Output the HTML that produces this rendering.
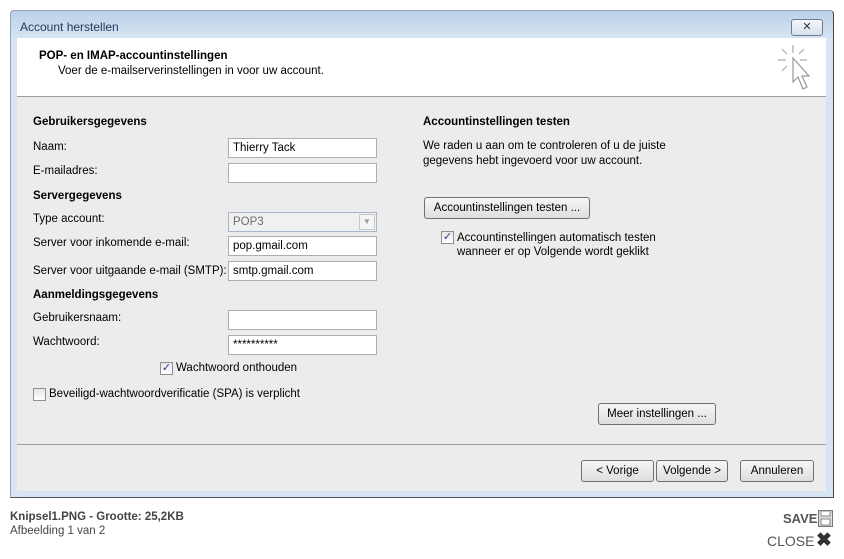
<!DOCTYPE html>
<html><head><meta charset="utf-8"><style>
*{margin:0;padding:0;box-sizing:border-box}
body{width:844px;height:559px;background:#fff;font-family:"Liberation Sans",sans-serif;font-size:11.5px;color:#000;position:relative;overflow:hidden}
.a{position:absolute;white-space:nowrap}
.b{font-weight:bold}
.in{position:absolute;background:#fff;border:1px solid #abadb3;height:20px;padding:3px 4px;font-size:11.5px}
.btn{position:absolute;height:22px;border:1px solid #707070;border-radius:3px;background:linear-gradient(#f6f6f6,#dedede);text-align:center;line-height:20px;font-size:11.5px}
.cb{position:absolute;width:13px;height:13px;border:1px solid #8f8f8f;background:linear-gradient(#e6e6e6,#fff)}
</style></head><body>
<div class="a" style="left:10px;top:10px;width:824px;height:488px;background:#cfdeee;border:1px solid #8ea4c0;border-right-color:#444;border-bottom-color:#555;border-radius:4px 4px 0 0;background:linear-gradient(#bcd0e6 0,#d7e5f3 28px,#d7e5f3 100%)"></div>
<div class="a" style="left:20px;top:20px;font-size:12px;color:#1e395b">Account herstellen</div>
<div class="a" style="left:791px;top:19px;width:32px;height:17px;border:1px solid #6b7d95;border-radius:3px;background:linear-gradient(#f4f7fa,#d8e1ec);text-align:center;font-size:11px;line-height:15px;color:#333">✕</div>
<div class="a" style="left:17px;top:38px;width:809px;height:453px;background:#ececec"></div>
<div class="a" style="left:17px;top:38px;width:809px;height:59px;background:#fff;border-bottom:1px solid #a0a0a0"></div>
<div class="a b" style="left:39px;top:50px">POP- en IMAP-accountinstellingen</div>
<div class="a" style="left:58px;top:65px">Voer de e-mailserverinstellingen in voor uw account.</div>
<svg class="a" style="left:776px;top:42px" width="38" height="52" viewBox="0 0 38 52"><g stroke="#bbb" stroke-width="1.5"><line x1="17" y1="3" x2="17" y2="11"/><line x1="2" y1="18" x2="10" y2="18"/><line x1="6" y1="7" x2="11" y2="12"/><line x1="28" y1="7" x2="23" y2="12"/><line x1="6" y1="29" x2="11" y2="24"/><line x1="24" y1="18" x2="31" y2="18"/></g><path d="M17 16 L17 40 L22 35 L27 47 L31 45 L26 34 L33 34 Z" fill="#fff" stroke="#999" stroke-width="1.2"/></svg>
<div class="a" style="left:17px;top:444px;width:809px;height:1px;background:#a0a0a0"></div>

<div class="a b" style="left:33px;top:116px">Gebruikersgegevens</div>
<div class="a" style="left:33px;top:141px">Naam:</div>
<div class="in" style="left:228px;top:138px;width:149px">Thierry Tack</div>
<div class="a" style="left:33px;top:165px">E-mailadres:</div>
<div class="in" style="left:228px;top:163px;width:149px"></div>
<div class="a b" style="left:33px;top:190px">Servergegevens</div>
<div class="a" style="left:33px;top:213px">Type account:</div>
<div class="in" style="left:228px;top:212px;width:149px;background:#f0f0f0;border-color:#a7b6c8;color:#6d6d6d">POP3<div style="position:absolute;right:1px;top:1px;width:16px;height:16px;border:1px solid #c8c8c8;background:#f4f4f4;font-size:8px;text-align:center;line-height:14px;color:#999">▼</div></div>
<div class="a" style="left:33px;top:237px">Server voor inkomende e-mail:</div>
<div class="in" style="left:228px;top:236px;width:149px">pop.gmail.com</div>
<div class="a" style="left:33px;top:265px">Server voor uitgaande e-mail (SMTP):</div>
<div class="in" style="left:228px;top:261px;width:149px">smtp.gmail.com</div>
<div class="a b" style="left:33px;top:289px">Aanmeldingsgegevens</div>
<div class="a" style="left:33px;top:312px">Gebruikersnaam:</div>
<div class="in" style="left:228px;top:310px;width:149px"></div>
<div class="a" style="left:33px;top:336px">Wachtwoord:</div>
<div class="in" style="left:228px;top:335px;width:149px">**********</div>
<div class="cb" style="left:160px;top:362px;font-size:11px;line-height:11px;color:#2a3b8f;text-align:center">✓</div>
<div class="a" style="left:176px;top:362px">Wachtwoord onthouden</div>
<div class="cb" style="left:33px;top:388px"></div>
<div class="a" style="left:49px;top:388px">Beveiligd-wachtwoordverificatie (SPA) is verplicht</div>

<div class="a b" style="left:423px;top:116px">Accountinstellingen testen</div>
<div class="a" style="left:423px;top:139px;line-height:15px">We raden u aan om te controleren of u de juiste<br>gegevens hebt ingevoerd voor uw account.</div>
<div class="btn" style="left:424px;top:197px;width:166px">Accountinstellingen testen ...</div>
<div class="cb" style="left:441px;top:231px;font-size:11px;line-height:11px;color:#2a3b8f;text-align:center">✓</div>
<div class="a" style="left:457px;top:231px;line-height:14px">Accountinstellingen automatisch testen<br>wanneer er op Volgende wordt geklikt</div>
<div class="btn" style="left:598px;top:403px;width:118px">Meer instellingen ...</div>

<div class="btn" style="left:581px;top:460px;width:73px">&lt; Vorige</div>
<div class="btn" style="left:656px;top:460px;width:72px">Volgende &gt;</div>
<div class="btn" style="left:740px;top:460px;width:74px">Annuleren</div>

<div class="a b" style="left:10px;top:511px;font-size:11.5px;color:#444">Knipsel1.PNG - Grootte: 25,2KB</div>
<div class="a" style="left:10px;top:525px;font-size:11.5px;color:#444">Afbeelding 1 van 2</div>
<div class="a b" style="left:783px;top:511px;font-size:13px;color:#555">SAVE</div>
<svg class="a" style="left:818px;top:510px" width="15" height="17"><rect x="0.5" y="0.5" width="14" height="16" fill="#ddd" stroke="#777"/><rect x="3" y="1" width="9" height="5" fill="#fff" stroke="#888"/><rect x="3" y="9" width="9" height="6" fill="#fff" stroke="#888"/></svg>
<div class="a" style="left:767px;top:533px;font-size:14px;color:#555">CLOSE</div>
<div class="a b" style="left:816px;top:529px;font-size:19px;color:#333">✖</div>
</body></html>
